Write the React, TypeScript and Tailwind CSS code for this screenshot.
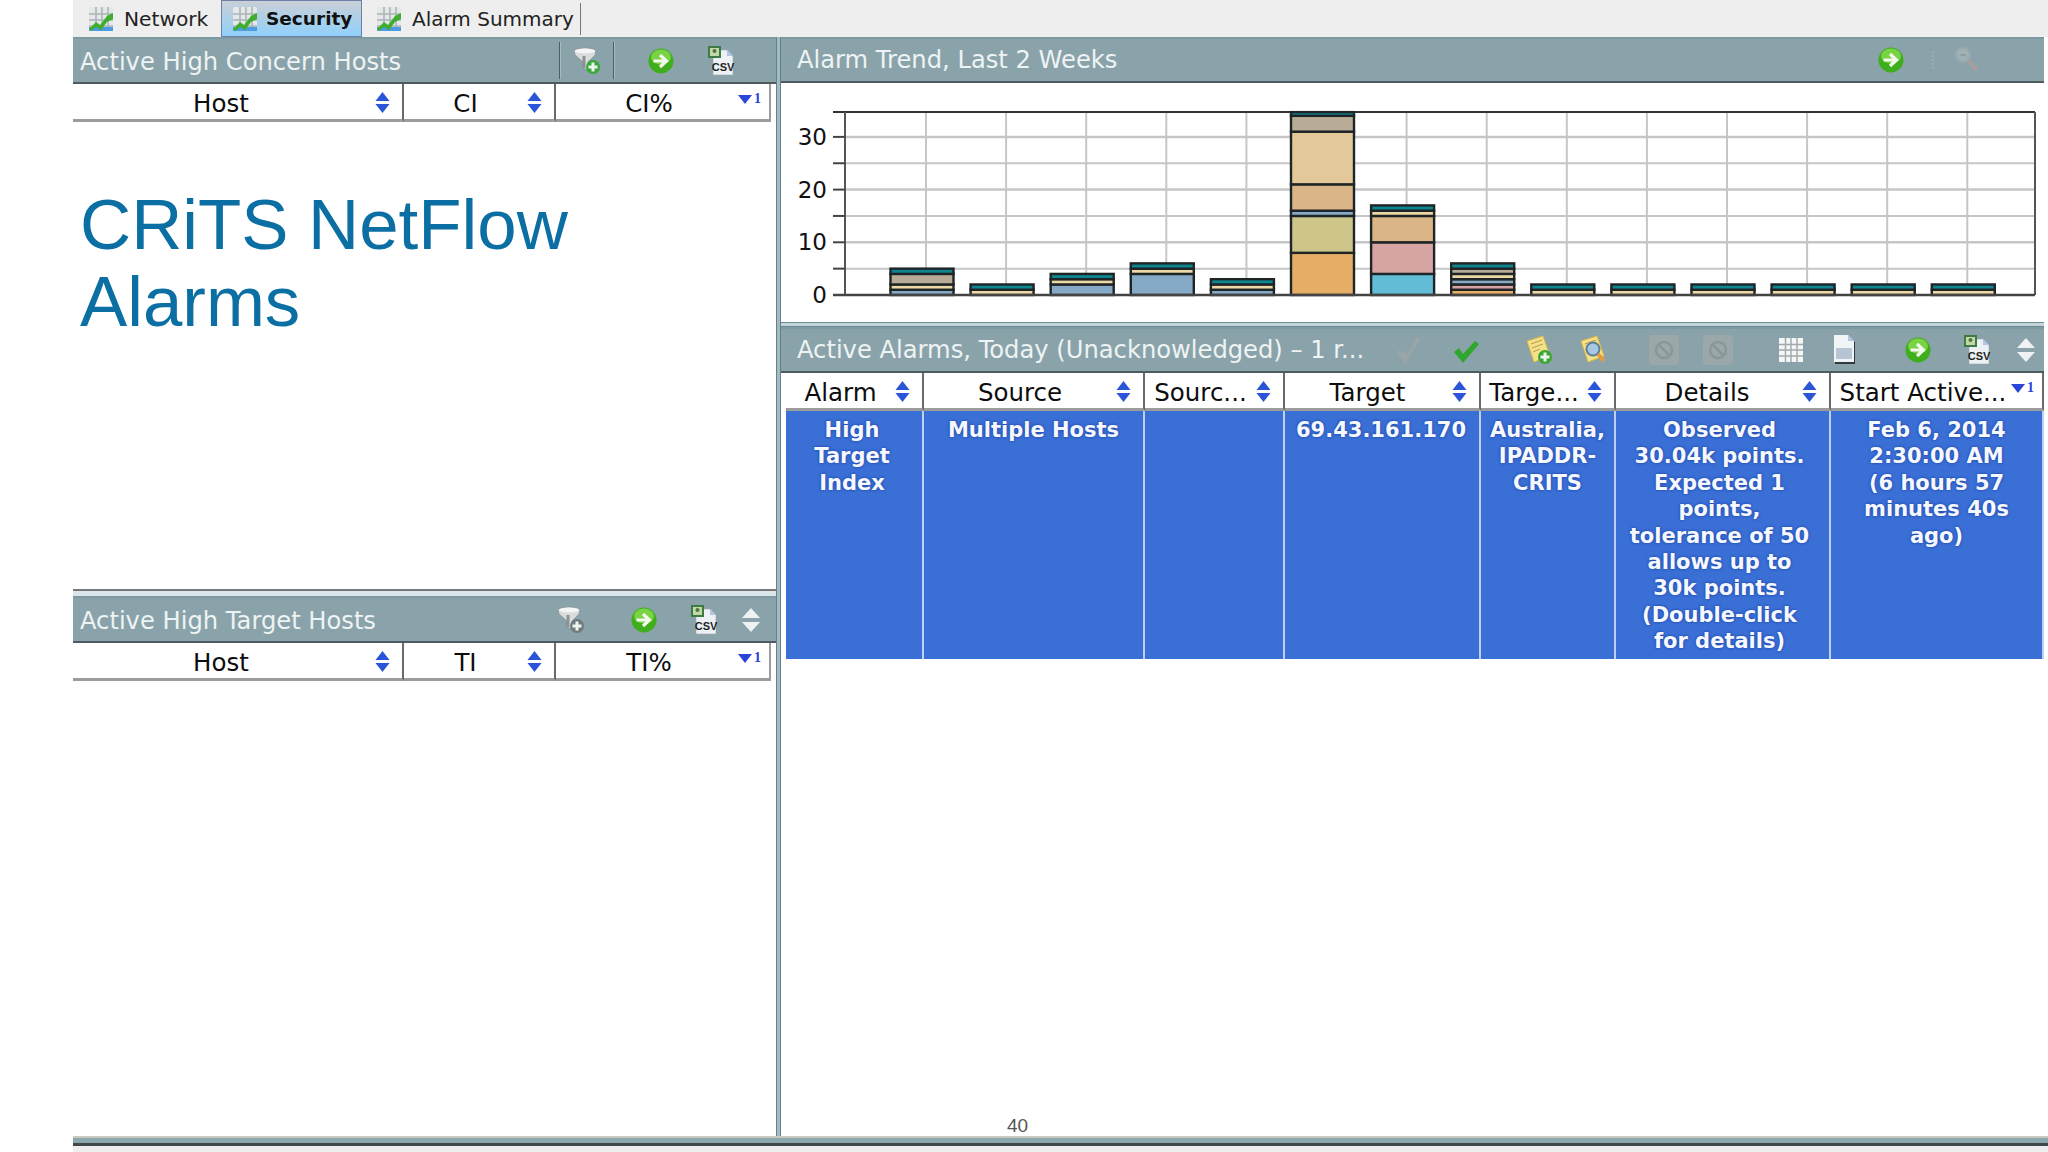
const UI_FONT = "font-['DejaVu_Sans',sans-serif]";

function TabIcon() {
  return (
    <svg width="28" height="28" viewBox="0 0 28 28">
      <rect x="2" y="2" width="24" height="24" rx="2" fill="#e4e8e9" />
      <path d="M2 9h24M2 15h24M2 21h24M9 2v24M15 2v24M21 2v24" stroke="#a9b3b5" strokeWidth="1.5" />
      <rect x="2" y="22" width="24" height="4" fill="#4d9be0" />
      <path d="M2 24 L9 17 L13 20 L20 11 L26 8 L26 14 L20 17 L14 25 L9 22 L4 26 Z" fill="#3fae2c" />
    </svg>
  );
}

function SortIcon() {
  return (
    <svg width="15" height="22" viewBox="0 0 15 22" className="shrink-0 -mt-[2px]">
      <path d="M7.5 0 L14.5 9 H0.5 Z" fill="#2b55d8" />
      <path d="M7.5 21 L14.5 12 H0.5 Z" fill="#2b55d8" />
    </svg>
  );
}

function SortedIcon() {
  return (
    <span className="shrink-0 self-start mt-[3px] flex items-start gap-[2px] text-[#2b45d8]">
      <svg width="14" height="9" viewBox="0 0 14 9" className="mt-[3px]">
        <path d="M0 0 H14 L7 9 Z" fill="#2b45d8" />
      </svg>
      <span className="text-[14px] leading-[14px] font-bold font-['Liberation_Serif',serif]">1</span>
    </span>
  );
}

function GreenArrow() {
  return (
    <svg width="28" height="28" viewBox="0 0 28 28" className="shrink-0">
      <circle cx="14" cy="14" r="12.5" fill="#3fae1c" />
      <ellipse cx="14" cy="10" rx="10" ry="7.5" fill="#79d342" />
      <path d="M6.5 14h12M13 8l6.5 6-6.5 6" fill="none" stroke="#f3f8ee" strokeWidth="3.2" />
    </svg>
  );
}

function CsvIcon() {
  return (
    <svg width="28" height="30" viewBox="0 0 28 30" className="shrink-0">
      <path d="M6 4h14l6 6v19H6Z" fill="#eef1f3" stroke="#99a6b0" strokeWidth="0.6" />
      <path d="M20 4v6h6" fill="#b4c6e6" />
      <rect x="1" y="0" width="13" height="12" fill="#3e7a44" />
      <rect x="3" y="2" width="9" height="8" fill="#c3d7a8" />
      <circle cx="7.5" cy="5" r="2" fill="#4a7a3c" />
      <text x="16" y="25" textAnchor="middle" fontSize="11" fontWeight="700" fill="#1d2426" fontFamily="'Liberation Sans',sans-serif">CSV</text>
    </svg>
  );
}

function FunnelIcon({ plus }: { plus: string }) {
  return (
    <svg width="28" height="28" viewBox="0 0 28 28" className="shrink-0">
      <path d="M1 3 Q12 -1 23 3 L22 8 L15 15 V23 L10 21 V15 L2 8 Z" fill="#d9dcdc" stroke="#7c8486" strokeWidth="0.6" />
      <ellipse cx="12" cy="4" rx="10" ry="2.4" fill="#f4f5f5" />
      <path d="M11 9 V21" stroke="#8b9294" strokeWidth="3" />
      <circle cx="20" cy="20" r="7" fill={plus} />
      <path d="M20 15.5v9M15.5 20h9" stroke="#eef5ee" strokeWidth="3" />
    </svg>
  );
}

function UpDown() {
  return (
    <svg width="20" height="26" viewBox="0 0 20 26" className="shrink-0">
      <path d="M10 1 L19 11 H1 Z" fill="#eef2f3" />
      <path d="M10 25 L19 15 H1 Z" fill="#eef2f3" />
    </svg>
  );
}

function CheckIcon({ faded }: { faded?: boolean }) {
  return (
    <svg width="28" height="28" viewBox="0 0 28 28" className="shrink-0">
      {faded ? (
        <path d="M3 15 L10 25 L24 2 M8 15 L12 22" fill="none" stroke="#9aa5a6" strokeWidth="3.5" />
      ) : (
        <path d="M2 16 L7 12 L11 18 L23 5 L27 8 L11 27 Z" fill="#2fa62c" />
      )}
    </svg>
  );
}

function NoteIcon({ kind }: { kind: 'add' | 'search' }) {
  return (
    <svg width="28" height="30" viewBox="0 0 28 30" className="shrink-0">
      <path d="M2 6 L18 1 L25 21 L9 27 Z" fill="#f3e08a" stroke="#d9b840" strokeWidth="1" />
      <path d="M6 9 L17 5 M7 13 L18 9 M8 17 L15 14" stroke="#b79c45" strokeWidth="1" />
      {kind === 'add' ? (
        <>
          <circle cx="20" cy="22" r="7" fill="#3aa52f" />
          <path d="M20 17.5v9M15.5 22h9" stroke="#eef5ee" strokeWidth="3" />
        </>
      ) : (
        <>
          <circle cx="14" cy="14" r="6.5" fill="#a6c8e4" stroke="#5d7d98" strokeWidth="2" />
          <path d="M19 19 L25 26" stroke="#e79a3c" strokeWidth="3.5" />
        </>
      )}
    </svg>
  );
}

function DisabledIcon() {
  return (
    <svg width="30" height="30" viewBox="0 0 30 30" className="shrink-0 -mx-px">
      <rect x="0" y="0" width="30" height="30" rx="4" fill="#9aa8aa" />
      <circle cx="15" cy="15" r="8" fill="none" stroke="#8a9799" strokeWidth="2.5" />
      <path d="M10 10 L20 20" stroke="#8a9799" strokeWidth="2.5" />
    </svg>
  );
}

function GridIcon() {
  return (
    <svg width="26" height="26" viewBox="0 0 26 26" className="shrink-0 mx-px">
      <rect x="1" y="1" width="24" height="24" fill="#f4f5f5" />
      <path d="M1 7.5h24M1 13h24M1 19h24M7.5 1v24M13 1v24M19 1v24" stroke="#9fa9ad" strokeWidth="1.4" />
    </svg>
  );
}

function DocIcon() {
  return (
    <svg width="28" height="32" viewBox="0 0 28 32" className="shrink-0">
      <path d="M5 2h14l6 6v22H5Z" fill="#2e3a40" />
      <path d="M4 1h14l6 6v21H4Z" fill="#f1f4f6" />
      <path d="M18 1v6h6" fill="#b4c6e6" />
      <rect x="6" y="14" width="16" height="11" fill="#b6c4d4" />
    </svg>
  );
}

function MagnifierIcon() {
  return (
    <svg width="28" height="28" viewBox="0 0 28 28" className="shrink-0">
      <circle cx="10" cy="9" r="7" fill="#a0b1b6" stroke="#98aaaf" strokeWidth="2" />
      <path d="M7 9h6" stroke="#8f9fa4" strokeWidth="2" />
      <path d="M15 14 L24 24" stroke="#a99da2" strokeWidth="4" />
    </svg>
  );
}

function ToolSep() {
  return <div className="w-[2px] self-stretch my-[3px] bg-[#4c5f66] border-r border-[#a6bac0]" />;
}

function PanelHeader({ title, children, inset }: { title: string; children?: React.ReactNode; inset?: boolean }) {
  return (
    <div className={`flex shrink-0 items-center bg-[#8aa3aa] border-t-[2px] border-b-[2px] border-t-[#7d99a2] border-b-[#4d5a60] ${inset ? 'h-[46px]' : 'h-[47px]'} ${UI_FONT}`}>
      <span className={`${inset ? 'pl-[16px] pt-[1px]' : 'pl-[7px] pt-[4px]'} text-[24.2px] leading-none text-[#eef3f3] whitespace-nowrap`}>{title}</span>
      {children}
    </div>
  );
}

function ColHead({ label, sorted, textClass }: { label: string; sorted?: boolean; textClass?: string }) {
  return (
    <div className={`flex h-[38px] items-center border-r-[2px] border-r-[#6a6a6a] border-b-[3px] border-b-[#9c9c9c] bg-white pl-[4px] pt-[5px] last:border-r-[#9c9c9c] ${sorted ? 'pr-[8px]' : 'pr-[12px]'}`}>
      <span className={`flex-1 text-center text-[24.5px] leading-none text-[#0d0d0d] whitespace-nowrap ${textClass ?? (sorted ? '' : 'pr-[4px]')}`}>{label}</span>
      {sorted ? <SortedIcon /> : <SortIcon />}
    </div>
  );
}

function HostTable({ cols }: { cols: string[] }) {
  return (
    <div className={`grid grid-cols-[331px_152px_215px] w-[698px] shrink-0 ${UI_FONT}`}>
      <ColHead label={cols[0]} textClass="pr-[10px]" />
      <ColHead label={cols[1]} />
      <ColHead label={cols[2]} sorted />
    </div>
  );
}

function AlarmCell({ lines, className }: { lines: string[]; className?: string }) {
  return (
    <div className={`h-[248px] border-r-[2px] border-r-[#bcd0f5] bg-[#3a6fd6] pt-[6px] text-center text-[21px] font-bold leading-[26.4px] text-[#f6f8ff] [text-shadow:0_0_3px_#173a9a] ${className ?? ''}`}>
      {lines.map((line) => (
        <div key={line} className="whitespace-nowrap">
          {line}
        </div>
      ))}
    </div>
  );
}

type Segment = { value: number; color: string };

const BLUE = '#86aac6';
const CREAM = '#ecd9a6';
const TAUPE = '#b8ac96';
const TEAL = '#0e8690';
const ORANGE = '#e6ad66';
const TAN = '#dab587';
const PINK = '#d6a4a3';

const small: Segment[] = [
  { value: 1, color: CREAM },
  { value: 1, color: TEAL },
];

const bars: Segment[][] = [
  [{ value: 1, color: BLUE }, { value: 1, color: CREAM }, { value: 2, color: TAUPE }, { value: 1, color: TEAL }],
  small,
  [{ value: 2, color: BLUE }, { value: 1, color: CREAM }, { value: 1, color: TEAL }],
  [{ value: 4, color: BLUE }, { value: 1, color: CREAM }, { value: 1, color: TEAL }],
  [{ value: 1, color: BLUE }, { value: 1, color: CREAM }, { value: 1, color: TEAL }],
  [
    { value: 8, color: ORANGE },
    { value: 7, color: '#cdc58a' },
    { value: 1, color: BLUE },
    { value: 5, color: TAN },
    { value: 10, color: '#e3c99a' },
    { value: 3, color: TAUPE },
    { value: 0.7, color: TEAL },
  ],
  [{ value: 4, color: '#62bcd6' }, { value: 6, color: PINK }, { value: 5, color: TAN }, { value: 1, color: CREAM }, { value: 1, color: TEAL }],
  [
    { value: 1, color: ORANGE },
    { value: 1, color: PINK },
    { value: 1, color: BLUE },
    { value: 1, color: CREAM },
    { value: 1, color: TAUPE },
    { value: 1, color: TEAL },
  ],
  small,
  small,
  small,
  small,
  small,
  small,
];

function TrendChart() {
  const unit = 5.27;
  const base = 212;
  const y = (v: number) => base - v * unit;
  const gridX = Array.from({ length: 14 }, (_, i) => 145 + i * 80.1);

  return (
    <svg width="1263" height="239" viewBox="0 0 1263 239" className="block">
      <rect width="1263" height="239" fill="#fff" />
      {[5, 10, 15, 20, 25, 30].map((v) => (
        <line key={v} x1="64" x2="1254" y1={y(v)} y2={y(v)} stroke="#c6c6c6" strokeWidth={v % 10 === 0 ? 2.5 : 2} />
      ))}
      {gridX.map((x) => (
        <line key={x} x1={x} x2={x} y1="29" y2={base} stroke="#c6c6c6" strokeWidth="2" />
      ))}
      <line x1="52" x2="1254" y1="29" y2="29" stroke="#333" strokeWidth="2" />
      <line x1="64" x2="64" y1="29" y2={base} stroke="#555" strokeWidth="2" />
      <line x1="1254" x2="1254" y1="29" y2={base} stroke="#555" strokeWidth="2" />
      {[5, 10, 15, 20, 25, 30].map((v) => (
        <line key={v} x1="52" x2="64" y1={y(v)} y2={y(v)} stroke="#444" strokeWidth="2" />
      ))}
      {[0, 10, 20, 30].map((v) => (
        <text key={v} x="46" y={y(v) + 8} textAnchor="end" fontSize="23" fill="#111" fontFamily="'DejaVu Sans',sans-serif">
          {v}
        </text>
      ))}
      {bars.map((segments, i) => {
        const left = 109.5 + i * 80.1;
        let sum = 0;
        return (
          <g key={i}>
            {segments.map((seg, j) => {
              const rect = (
                <rect key={j} x={left} y={y(sum + seg.value)} width="63" height={seg.value * unit} fill={seg.color} stroke="#1f2426" strokeWidth="2.4" />
              );
              sum += seg.value;
              return rect;
            })}
          </g>
        );
      })}
      <line x1="52" x2="1254" y1={base} y2={base} stroke="#444" strokeWidth="2.5" />
    </svg>
  );
}

export default function App() {
  return (
    <div className={`relative flex h-[1152px] w-[2048px] flex-col overflow-hidden bg-white pl-[73px] ${UI_FONT}`}>
      <div className="flex h-[37px] shrink-0 items-stretch bg-[#eeeeee] text-[20.2px] leading-[32px] text-[#222]">
        <div className="flex w-[148px] items-center gap-[9px] pl-[14px]">
          <TabIcon />
          <span>Network</span>
        </div>
        <div className="flex w-[141px] items-center gap-[7px] border border-[#6d7fa6] bg-gradient-to-b from-[#c9cfd6] to-[#8fd0fb] pl-[9px] text-[18.5px] font-bold text-[#111]">
          <TabIcon />
          <span>Security</span>
        </div>
        <div className="flex items-center gap-[9px] pl-[13px] pr-[7px]">
          <TabIcon />
          <span className="border-r border-r-[#777] pr-[6px] text-[20px]">Alarm Summary</span>
        </div>
      </div>

      <div className="flex min-h-0 flex-1">
        <div className="flex w-[703px] shrink-0 flex-col">
          <div className="flex h-[552px] shrink-0 flex-col">
            <PanelHeader title="Active High Concern Hosts">
              <div className="ml-auto flex h-full items-center pr-[41px]">
                <ToolSep />
                <div className="ml-[12px]"><FunnelIcon plus="#38a938" /></div>
                <div className="ml-[12px] flex h-full"><ToolSep /></div>
                <div className="ml-[32px]"><GreenArrow /></div>
                <div className="ml-[32px]"><CsvIcon /></div>
              </div>
            </PanelHeader>
            <HostTable cols={['Host', 'CI', 'CI%']} />
            <div className="pl-[7px] pt-[64px] text-[70.8px] leading-[77px] text-[#0b6fa4] font-['Liberation_Sans',sans-serif]">
              CRiTS NetFlow
              <br />
              Alarms
            </div>
          </div>
          <div className="h-[7px] shrink-0 border-t-[2px] border-t-[#77777a] bg-[#dbe6ea]" />
          <PanelHeader title="Active High Target Hosts">
            <div className="ml-auto flex items-center pr-[15px]">
              <FunnelIcon plus="#6f7a7c" />
              <div className="ml-[45px]"><GreenArrow /></div>
              <div className="ml-[32px]"><CsvIcon /></div>
              <div className="ml-[23px]"><UpDown /></div>
            </div>
          </PanelHeader>
          <HostTable cols={['Host', 'TI', 'TI%']} />
        </div>

        <div className="w-[5px] shrink-0 border-x border-x-[#64808a] bg-[#a3bac1]" />

        <div className="flex w-[1263px] shrink-0 flex-col">
          <PanelHeader title="Alarm Trend, Last 2 Weeks" inset>
            <div className="ml-auto flex items-center pr-[63px]">
              <GreenArrow />
              <div className="ml-[27px] h-[18px] border-l-[2px] border-dotted border-l-[#9ab0b6]" />
              <div className="ml-[19px]"><MagnifierIcon /></div>
            </div>
          </PanelHeader>
          <TrendChart />
          <div className="h-[5px] shrink-0 border-y border-y-[#6d8993] bg-[#c4d5da]" />
          <PanelHeader title="Active Alarms, Today (Unacknowledged) – 1 r..." inset>
            <div className="ml-auto flex items-center pr-[8px]">
              <CheckIcon faded />
              <div className="ml-[29px]"><CheckIcon /></div>
              <div className="ml-[45px]"><NoteIcon kind="add" /></div>
              <div className="ml-[26px]"><NoteIcon kind="search" /></div>
              <div className="ml-[43px]"><DisabledIcon /></div>
              <div className="ml-[26px]"><DisabledIcon /></div>
              <div className="ml-[45px]"><GridIcon /></div>
              <div className="ml-[25px]"><DocIcon /></div>
              <div className="ml-[46px]"><GreenArrow /></div>
              <div className="ml-[31px]"><CsvIcon /></div>
              <div className="ml-[25px]"><UpDown /></div>
            </div>
          </PanelHeader>
          <div className="grid grid-cols-[138px_221px_140px_196px_135px_215px_213px] pl-[5px]">
            <ColHead label="Alarm" />
            <ColHead label="Source" />
            <ColHead label="Sourc..." />
            <ColHead label="Target" textClass="pr-[6px]" />
            <ColHead label="Targe..." />
            <ColHead label="Details" textClass="pr-[8px]" />
            <ColHead label="Start Active..." sorted />
            <AlarmCell lines={['High', 'Target', 'Index']} className="pr-[4px]" />
            <AlarmCell lines={['Multiple Hosts']} />
            <AlarmCell lines={[]} />
            <AlarmCell lines={['69.43.161.170']} className="pr-[2px]" />
            <AlarmCell lines={['Australia,', 'IPADDR-', 'CRITS']} />
            <AlarmCell
              className="pr-[6px]"
              lines={[
                'Observed',
                '30.04k points.',
                'Expected 1',
                'points,',
                'tolerance of 50',
                'allows up to',
                '30k points.',
                '(Double-click',
                'for details)',
              ]}
            />
            <AlarmCell lines={['Feb 6, 2014', '2:30:00 AM', '(6 hours 57', 'minutes 40s', 'ago)']} />
          </div>
        </div>
      </div>

      <div className="h-[10px] shrink-0 bg-[linear-gradient(#c9c9c2_0_25%,#8aa7ab_25%_70%,#3f484b_70%_100%)]" />
      <div className="h-[6px] shrink-0 bg-[#eeeeee]" />

      <span className="absolute left-[1007px] top-[1114px] text-[19px] leading-[24px] text-[#555] font-['Liberation_Sans',sans-serif]">40</span>
    </div>
  );
}
